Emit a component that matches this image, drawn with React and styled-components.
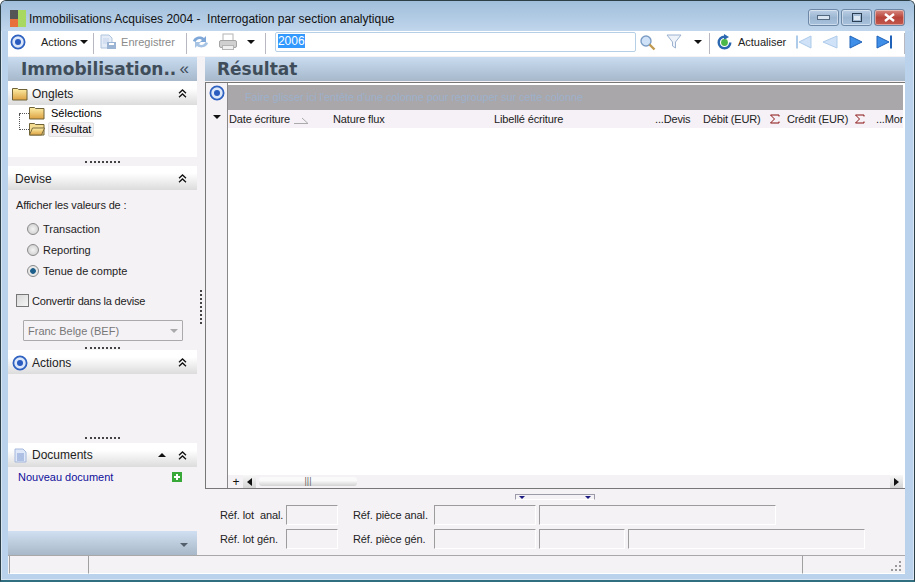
import React from "react";
import styled, { createGlobalStyle } from "styled-components";

const Global = createGlobalStyle`
  html, body { margin: 0; padding: 0; background: #fff; }
  body { font-family: "Liberation Sans", Arial, sans-serif; }
  * { box-sizing: border-box; }
`;

const Win = styled.div`
  width: 915px;
  height: 582px;
  display: flex;
  flex-direction: column;
  overflow: hidden;
  background: #bad2ec;
  border-radius: 6px 6px 0 0;
  border: 1px solid #2c3e46;
  border-bottom: 2px solid #2f6f80;
  box-shadow: inset 0 0 0 1px #d8e6f4;
`;
const TitleBar = styled.div`
  height: 30px;
  flex: none;
  display: flex;
  align-items: center;
  padding: 5px 9px 0 9px;
  background: linear-gradient(#a0bedb, #c0d6ec);
`;
const TitleText = styled.div`
  margin-left: 3px;
  font-size: 12px;
  color: #111;
  white-space: pre;
  flex: 1;
`;
const WinButtons = styled.div`
  display: flex;
  gap: 2px;
  margin-top: -2px;
`;
const WinButton = styled.div`
  width: 31px;
  height: 17px;
  border: 1px solid #6d88a6;
  border-radius: 3px;
  display: flex;
  align-items: center;
  justify-content: center;
  box-shadow: inset 0 0 0 1px #ffffff70;
  background: ${(p) => (p.$red ? "linear-gradient(#d88a80, #b8443a 50%, #c2584c)" : "linear-gradient(#bdd0e6, #9cb6d2 50%, #a8c2de)")};
`;
const Toolbar = styled.div`
  height: 25px;
  flex: none;
  margin: 0 9px 0 7px;
  background: #fff;
  display: flex;
  align-items: flex-start;
  padding-top: 1px;
  font-size: 11px;
  color: #222;
`;
const ToolSep = styled.div`
  width: 1px;
  height: 21px;
  flex: none;
  background: #b8b8c0;
  margin: 1px ${(p) => p.$r ?? 4}px 0 ${(p) => p.$l ?? 4}px;
`;
const ToolItem = styled.div`
  display: flex;
  align-items: center;
  flex: none;
  height: 20px;
  margin-left: ${(p) => p.$ml ?? 0}px;
  color: ${(p) => (p.$off ? "#8a8a8a" : "#222")};
  white-space: nowrap;
`;
const ToolLabel = styled.span`
  margin-left: 4px;
`;
const Caret = styled.span`
  display: inline-block;
  width: 0;
  height: 0;
  margin-left: ${(p) => p.$ml ?? 3}px;
  margin-right: ${(p) => p.$mr ?? 0}px;
  border-left: 4px solid transparent;
  border-right: 4px solid transparent;
  ${(p) => (p.$up ? "border-bottom: 4px solid #111;" : "border-top: 4px solid #111;")}
`;
const SearchBox = styled.div`
  width: 361px;
  height: 20px;
  flex: none;
  border: 1px solid #b5cfe6;
  border-radius: 2px;
  background: #fff;
  padding: 1px 2px;
  margin-left: 4px;
  font-size: 12px;
`;
const Selected = styled.span`
  background: #3399ff;
  color: #fff;
  display: inline-block;
  line-height: 14px;
`;
const Main = styled.div`
  flex: 1;
  margin: 0 9px 0 7px;
  padding-top: 1px;
  background: #f5f2f6;
  display: flex;
  min-height: 0;
`;
const Sidebar = styled.div`
  width: 189px;
  flex: none;
  display: flex;
  flex-direction: column;
`;
const PanelTitle = styled.div`
  height: 24px;
  flex: none;
  padding: ${(p) => p.$pad};
  display: flex;
  align-items: center;
  justify-content: space-between;
  background: linear-gradient(#c9dcf0, #a6b8ca);
  font-family: "DejaVu Sans", sans-serif;
  font-weight: bold;
  font-size: 17px;
  color: #3f4d5a;
  white-space: nowrap;
`;
const Collapse = styled.span`
  font-family: "Liberation Sans", sans-serif;
  font-weight: normal;
  font-size: 17px;
`;
const SectionHead = styled.div`
  height: 24px;
  flex: none;
  display: flex;
  align-items: center;
  gap: 4px;
  padding: ${(p) => p.$pt ?? 1}px 10px 0 ${(p) => p.$pl ?? 4}px;
  background: linear-gradient(#ffffff 30%, #dcdcdc);
  font-size: 12px;
  color: #222;
`;
const SectionLabel = styled.span`
  flex: 1;
`;
const Tree = styled.div`
  height: 52px;
  flex: none;
  background: #fff;
  padding: 0 0 0 11px;
  font-size: 11px;
`;
const TreeRow = styled.div`
  height: 16px;
  display: flex;
  align-items: center;
`;
const TreeLine = styled.span`
  width: 10px;
  flex: none;
  align-self: flex-start;
  height: ${(p) => (p.$tall ? 16 : 9)}px;
  margin-top: ${(p) => (p.$tall ? -7 : 0)}px;
  border-bottom: 1px dotted #555;
  border-left: ${(p) => (p.$tall ? "1px dotted #555" : "none")};
`;
const TreeLabel = styled.span`
  padding: 0 2px;
  margin-left: 3px;
  line-height: 13px;
  border-radius: 2px;
  background: ${(p) => (p.$active ? "#f2f0f2" : "transparent")};
  border: 1px solid ${(p) => (p.$active ? "#e2e2e2" : "transparent")};
`;
const Grip = styled.div`
  height: ${(p) => p.$h}px;
  flex: none;
  display: flex;
  align-items: center;
  justify-content: center;
  &::after {
    content: "";
    width: 35px;
    border-top: 2px dotted #444;
  }
`;
const DeviseBody = styled.div`
  height: 155px;
  flex: none;
  padding: 9px 0 0 8px;
  font-size: 11px;
  color: #222;
`;
const DeviseCaption = styled.div`
  letter-spacing: -0.15px;
`;
const Radios = styled.div`
  display: flex;
  flex-direction: column;
  margin: 7px 0 0 11px;
`;
const RadioRow = styled.div`
  display: flex;
  align-items: center;
  gap: 4px;
  height: 21px;
`;
const RadioDot = styled.span`
  width: 12px;
  height: 12px;
  border-radius: 50%;
  border: 1px solid #8a8a8a;
  background: ${(p) => (p.$on ? "radial-gradient(#1d5f8a 35%, #e8e8e8 45%)" : "radial-gradient(#f4f4f4, #c8c8c8)")};
`;
const CheckRow = styled.div`
  display: flex;
  align-items: center;
  gap: 3px;
  margin-top: 13px;
  letter-spacing: -0.2px;
`;
const CheckBox = styled.span`
  width: 13px;
  height: 13px;
  border: 1px solid #777;
  background: linear-gradient(135deg, #d8d8d8, #f6f6f6);
`;
const Combo = styled.div`
  width: 160px;
  height: 21px;
  margin: 13px 0 0 7px;
  border: 1px solid #aaa;
  border-radius: 1px;
  display: flex;
  align-items: center;
  justify-content: space-between;
  padding: 0 4px;
  color: #777;
`;
const ComboCaret = styled.span`
  width: 0;
  height: 0;
  border-left: 4px solid transparent;
  border-right: 4px solid transparent;
  border-top: 4px solid #aaa;
`;
const ActionsBody = styled.div`
  height: 58px;
  flex: none;
`;
const DocRow = styled.div`
  display: flex;
  align-items: center;
  justify-content: space-between;
  padding: 4px 15px 0 10px;
  color: #10109a;
  font-size: 11px;
`;
const Spacer = styled.div`
  flex: 1;
`;
const SideFoot = styled.div`
  height: 24px;
  flex: none;
  display: flex;
  align-items: center;
  justify-content: flex-end;
  padding: 3px 9px 0 0;
  background: linear-gradient(#d0e0f2, #a8b8c8);
`;
const FootCaret = styled.span`
  border-left: 4px solid transparent;
  border-right: 4px solid transparent;
  border-top: 4px solid #54606c;
`;
const RightCol = styled.div`
  flex: 1;
  min-width: 0;
  margin-left: 8px;
  display: flex;
  flex-direction: column;
  position: relative;
`;
const VGrip = styled.div`
  position: absolute;
  left: -5px;
  top: 233px;
  height: 34px;
  border-left: 2px dotted #444;
`;
const Grid = styled.div`
  height: 407px;
  flex: none;
  display: flex;
  border: 1px solid #777;
  border-width: 1px 0 1px 1px;
  margin-top: 1px;
`;
const GridGutter = styled.div`
  width: 22px;
  flex: none;
  border-right: 1px solid #888;
  display: flex;
  flex-direction: column;
  align-items: center;
  padding-top: 2px;
`;
const GutterCaret = styled.span`
  margin-top: 14px;
  border-left: 4px solid transparent;
  border-right: 4px solid transparent;
  border-top: 4px solid #111;
`;
const GridMain = styled.div`
  flex: 1;
  min-width: 0;
  display: flex;
  flex-direction: column;
  padding-top: 2px;
  background: #fff;
`;
const GroupBar = styled.div`
  height: 25px;
  flex: none;
  margin-right: 2px;
  background: #a9a7a9;
  color: #9db0cb;
  font-size: 11px;
  letter-spacing: -0.1px;
  padding: 5px 0 0 17px;
  line-height: 14px;
  white-space: nowrap;
`;
const ColHeads = styled.div`
  height: 18px;
  flex: none;
  margin-right: 2px;
  display: flex;
  align-items: center;
  padding-left: 1px;
  background: #f5f1f6;
  font-size: 11px;
  letter-spacing: -0.15px;
  color: #222;
  white-space: nowrap;
  overflow: hidden;
`;
const Col = styled.div`
  width: ${(p) => p.$w}px;
  flex: none;
  display: flex;
  align-items: center;
`;
const Rows = styled.div`
  flex: 1;
`;
const ScrollRow = styled.div`
  height: 13px;
  flex: none;
  margin-right: 2px;
  display: flex;
  align-items: center;
  padding-left: 1px;
  background: #f5f2f6;
  color: #111;
  font-size: 12px;
`;
const Plus = styled.span`
  width: 14px;
  text-align: center;
  line-height: 12px;
`;
const ScrollBtn = styled.span`
  width: 13px;
  height: 13px;
  flex: none;
  display: flex;
  align-items: center;
  justify-content: center;
  background: linear-gradient(#f8f8f8, #d4d4d4);
  &::after {
    content: "";
    border-top: 4px solid transparent;
    border-bottom: 4px solid transparent;
    border-${(p) => (p.$left ? "right" : "left")}: 5px solid #111;
  }
`;
const ScrollThumb = styled.div`
  width: 98px;
  height: 9px;
  margin-left: 3px;
  border-radius: 3px;
  background: linear-gradient(#fafafa 40%, #d2d2d2);
  color: #666;
  font-size: 9px;
  line-height: 9px;
  text-align: center;
`;
const SplitRow = styled.div`
  height: 16px;
  flex: none;
  position: relative;
`;
const SplitHandle = styled.div`
  position: absolute;
  left: 310px;
  top: 5px;
  width: 80px;
  height: 6px;
  border: 1px solid #9a9aa8;
  border-bottom-color: #fff;
  display: flex;
  justify-content: space-between;
  padding: 1px 3px 0;
`;
const SplitCaret = styled.span`
  border-left: 3px solid transparent;
  border-right: 3px solid transparent;
  border-top: 3px solid #1a1a80;
`;
const FormArea = styled.div`
  display: flex;
  flex-direction: column;
  gap: 4px;
  padding: 0 0 0 15px;
  font-size: 11px;
  color: #222;
`;
const FormRow = styled.div`
  display: flex;
  align-items: center;
  height: 20px;
`;
const FormLabel = styled.div`
  width: ${(p) => p.$w}px;
  flex: none;
  padding-left: ${(p) => p.$pl ?? 0}px;
  letter-spacing: -0.1px;
  white-space: pre;
`;
const Field = styled.div`
  width: ${(p) => p.$w}px;
  height: 20px;
  flex: none;
  margin-left: ${(p) => p.$ml ?? 0}px;
  border: 1px solid #fff;
  border-top-color: #9c9c9c;
  border-left-color: #9c9c9c;
`;
const Status = styled.div`
  height: 19px;
  flex: none;
  margin: 0 9px 0 7px;
  background: #f5f2f6;
  border-top: 1px solid #a8a8a8;
  display: flex;
  padding-left: 1px;
  position: relative;
`;
const StatusCell = styled.div`
  width: ${(p) => p.$w}px;
  flex: ${(p) => (p.$w ? "none" : "1")};
  border-left: 1px solid #a0a0a0;
  border-bottom: 1px solid #fff;
`;
const ResizeGrip = styled.svg`
  position: absolute;
  right: 3px;
  bottom: 2px;
`;
const FrameBottom = styled.div`
  height: 6px;
  flex: none;
`;

const Target = ({ size = 16 }) => (
  <svg width={size} height={size} viewBox="0 0 16 16" style={{ flex: "none" }}>
    <circle cx="8" cy="8" r="6.6" fill="#dce8fa" stroke="#2f62c0" strokeWidth="1.8" />
    <circle cx="8" cy="8" r="3" fill="#2a5cc0" />
  </svg>
);
const Folder = ({ open }) => (
  <svg width="16" height="14" viewBox="0 0 16 14" style={{ flex: "none" }}>
    <defs>
      <linearGradient id="fold" x1="0" y1="0" x2="0" y2="1">
        <stop offset="0" stopColor="#fdf0a8" />
        <stop offset="1" stopColor="#dca040" />
      </linearGradient>
    </defs>
    <path d="M.5 1.500h5l1 1h8.500v10.500H.5z" fill={open ? "#f4dc90" : "url(#fold)"} stroke="#6f6238" />
    {open && <path d="M.5 13l3-7h12l-3 7z" fill="url(#fold)" stroke="#7a6a3a" />}
  </svg>
);
const DoubleUp = () => (
  <svg width="9" height="9" viewBox="0 0 9 9" style={{ flex: "none" }}>
    <path d="M1 4.200L4.500 1 8 4.200M1 8.200L4.500 5 8 8.200" fill="none" stroke="#111" strokeWidth="1.3" />
  </svg>
);
const Sigma = () => (
  <svg width="11" height="10" viewBox="0 0 11 10">
    <path d="M10 2.500V1H1.500L5.500 5 1.500 9H10V7.500" fill="none" stroke="#8a1010" strokeWidth="1" />
  </svg>
);
const Nav = ({ dir, bar, off }) => {
  const fill = off ? "#cfe2f8" : "#3f8fe8";
  const edge = off ? "#aecbea" : "#1f62b8";
  const tri = {
    l: bar ? "M16 2v12L4 8z" : "M15 2v12L1 8z",
    r: bar ? "M1 2v12l12-6z" : "M2 2v12l12-6z",
  }[dir];
  return (
    <svg width="17" height="16" viewBox="0 0 17 16" style={{ flex: "none" }}>
      <path d={tri} fill={fill} stroke={edge} />
      {bar && <rect x={dir === "l" ? 1 : 14} y="1.500" width="2" height="13" fill={edge} />}
    </svg>
  );
};

export default function App() {
  return (
    <Win>
      <Global />
      <TitleBar>
        <svg width="16" height="17" viewBox="0 0 16 17" style={{ flex: "none" }}>
          <rect x="0" y="0" width="8" height="9" fill="#555" />
          <rect x="0" y="9" width="8" height="8" fill="#e8703a" />
          <rect x="8" y="0" width="8" height="17" fill="#a8d860" />
        </svg>
        <TitleText>Immobilisations Acquises 2004 -  Interrogation par section analytique</TitleText>
        <WinButtons>
          <WinButton><svg width="13" height="5"><rect x="0.5" y="0.5" width="12" height="4" fill="#d8e4f0" stroke="#55697e" /></svg></WinButton>
          <WinButton><svg width="10" height="9"><rect x="0.5" y="0.5" width="9" height="8" fill="none" stroke="#2c3e52" /><rect x="2" y="3" width="6" height="4" fill="#dfe9f4" /></svg></WinButton>
          <WinButton $red><svg width="11" height="9"><path d="M1 1l9 7M10 1L1 8" stroke="#fff" strokeWidth="2.4" /></svg></WinButton>
        </WinButtons>
      </TitleBar>
      <Toolbar>
        <ToolItem $ml={2}><Target /></ToolItem>
        <ToolItem $ml={15}>Actions<Caret /></ToolItem>
        <ToolSep $l={5} $r={5} />
        <ToolItem $off>
          <svg width="18" height="16" viewBox="0 0 18 16" style={{ flex: "none" }}>
            <path d="M2 1h8l3 3v10H2z" fill="#e4ecf8" stroke="#b0c4de" />
            <path d="M4 5h6M4 7h6M4 9h4" stroke="#c4d4ea" />
            <rect x="8" y="8" width="9" height="7" fill="#9cb4d4" />
            <rect x="10" y="9" width="5" height="2" fill="#fff" />
          </svg>
          <ToolLabel>Enregistrer</ToolLabel>
        </ToolItem>
        <ToolSep $l={11} $r={5} />
        <ToolItem>
          <svg width="17" height="16" viewBox="0 0 17 16">
            <path d="M1 7c1-4 7-6 11-3l2-2v6H8l2-2C8 4 5 5 3.500 8z" fill="#7fa8d8" />
            <path d="M16 9c-1 4-7 6-11 3l-2 2V8h6l-2 2c2 2 5 1 6.500-2z" fill="#a8c4e4" />
          </svg>
        </ToolItem>
        <ToolItem $ml={9}>
          <svg width="20" height="18" viewBox="0 0 20 18">
            <rect x="5" y="1" width="10" height="7" fill="#fff" stroke="#b4b4b4" />
            <rect x="1.500" y="7.500" width="17" height="7" rx="1.500" fill="#d0d0d0" stroke="#a4a4a4" />
            <rect x="4.500" y="12.500" width="11" height="4" fill="#f0f0f0" stroke="#b4b4b4" />
          </svg>
        </ToolItem>
        <ToolItem $ml={6}><Caret $ml={3} /></ToolItem>
        <ToolSep $l={10} $r={5} />
        <SearchBox><Selected>2006</Selected></SearchBox>
        <ToolItem $ml={3}>
          <svg width="17" height="17" viewBox="0 0 17 17">
            <circle cx="7" cy="7" r="5" fill="#cfe2f8" stroke="#7c9cc4" strokeWidth="1.4" />
            <path d="M10.500 10.500l5 5" stroke="#c09a50" strokeWidth="2.4" />
          </svg>
        </ToolItem>
        <ToolItem $ml={10}>
          <svg width="16" height="16" viewBox="0 0 16 16">
            <path d="M1 1h14L9.500 8v6l-3-2V8z" fill="#eef3fa" stroke="#9cb2d0" />
          </svg>
        </ToolItem>
        <ToolItem $ml={9}><Caret $ml={3} /></ToolItem>
        <ToolSep $l={7} $r={6} />
        <ToolItem>
          <svg width="17" height="17" viewBox="0 0 17 17">
            <path d="M8.500 1.500a7 7 0 1 0 7 7h-2.400a4.600 4.600 0 1 1-4.600-4.600z" fill="#2c68b0" />
            <path d="M8 0l5 3-5 3z" fill="#2c68b0" />
            <circle cx="8.500" cy="8.500" r="3.400" fill="#4cb848" />
          </svg>
        </ToolItem>
        <ToolItem $ml={5}>Actualiser</ToolItem>
        <ToolItem $ml={9}><Nav dir="l" bar off /></ToolItem>
        <ToolItem $ml={10}><Nav dir="l" off /></ToolItem>
        <ToolItem $ml={9}><Nav dir="r" /></ToolItem>
        <ToolItem $ml={11}><Nav dir="r" bar /></ToolItem>
        <ToolSep $l={11} $r={0} />
      </Toolbar>
      <Main>
        <Sidebar>
          <PanelTitle $pad="0 8px 0 13px">
            <span>Immobilisation..</span>
            <Collapse>«</Collapse>
          </PanelTitle>
          <SectionHead>
            <Folder />
            <SectionLabel>Onglets</SectionLabel>
            <DoubleUp />
          </SectionHead>
          <Tree>
            <TreeRow>
              <TreeLine />
              <Folder />
              <TreeLabel>Sélections</TreeLabel>
            </TreeRow>
            <TreeRow>
              <TreeLine $tall />
              <Folder open />
              <TreeLabel $active>Résultat</TreeLabel>
            </TreeRow>
          </Tree>
          <Grip $h={9} />
          <SectionHead $pl={7}>
            <SectionLabel>Devise</SectionLabel>
            <DoubleUp />
          </SectionHead>
          <DeviseBody>
            <DeviseCaption>Afficher les valeurs de :</DeviseCaption>
            <Radios>
              <RadioRow><RadioDot />Transaction</RadioRow>
              <RadioRow><RadioDot />Reporting</RadioRow>
              <RadioRow><RadioDot $on />Tenue de compte</RadioRow>
            </Radios>
            <CheckRow><CheckBox />Convertir dans la devise</CheckRow>
            <Combo>Franc Belge (BEF)<ComboCaret /></Combo>
          </DeviseBody>
          <Grip $h={5} />
          <SectionHead $pl={4}>
            <Target />
            <SectionLabel>Actions</SectionLabel>
            <DoubleUp />
          </SectionHead>
          <ActionsBody />
          <Grip $h={11} />
          <SectionHead $pl={5} $pt={0}>
            <svg width="15" height="15" viewBox="0 0 15 15" style={{ flex: "none" }}>
              <path d="M2 1h8l3 3v10H2z" fill="#dfe8f8" stroke="#a4b8dc" />
              <path d="M4 6h7M4 8h7M4 10h7M4 12h7" stroke="#7c98d0" />
            </svg>
            <SectionLabel>Documents</SectionLabel>
            <Caret $up $ml={0} $mr={8} />
            <DoubleUp />
          </SectionHead>
          <DocRow>
            Nouveau document
            <svg width="10" height="10" viewBox="0 0 10 10">
              <rect width="10" height="10" fill="#38a838" />
              <path d="M5 2v6M2 5h6" stroke="#fff" strokeWidth="2" />
            </svg>
          </DocRow>
          <Spacer />
          <SideFoot><FootCaret /></SideFoot>
        </Sidebar>
        <RightCol>
          <VGrip />
          <PanelTitle $pad="0 0 0 12px">Résultat</PanelTitle>
          <Grid>
            <GridGutter>
              <Target />
              <GutterCaret />
            </GridGutter>
            <GridMain>
              <GroupBar>Faire glisser ici l'entête d'une colonne pour regrouper sur cette colonne</GroupBar>
              <ColHeads>
                <Col $w={104}>
                  Date écriture
                  <svg width="15" height="7" viewBox="0 0 15 7" style={{ marginLeft: 4, marginTop: 3 }}>
                    <path d="M0 6.500h14L8 1" fill="none" stroke="#aaa" />
                  </svg>
                </Col>
                <Col $w={161}>Nature flux</Col>
                <Col $w={161}>Libellé écriture</Col>
                <Col $w={48}>...Devis</Col>
                <Col $w={66}>Débit (EUR)</Col>
                <Col $w={18}><Sigma /></Col>
                <Col $w={67}>Crédit (EUR)</Col>
                <Col $w={22}><Sigma /></Col>
                <Col $w={28}>...Mon</Col>
              </ColHeads>
              <Rows />
              <ScrollRow>
                <Plus>+</Plus>
                <ScrollBtn $left />
                <ScrollThumb>|||</ScrollThumb>
                <Spacer />
                <ScrollBtn />
              </ScrollRow>
            </GridMain>
          </Grid>
          <SplitRow>
            <SplitHandle><SplitCaret /><SplitCaret /></SplitHandle>
          </SplitRow>
          <FormArea>
            <FormRow>
              <FormLabel $w={66}>Réf. lot  anal.</FormLabel>
              <Field $w={52} />
              <FormLabel $w={96} $pl={15}>Réf. pièce anal.</FormLabel>
              <Field $w={102} />
              <Field $w={237} $ml={3} />
            </FormRow>
            <FormRow>
              <FormLabel $w={66}>Réf. lot gén.</FormLabel>
              <Field $w={52} />
              <FormLabel $w={96} $pl={15}>Réf. pièce gén.</FormLabel>
              <Field $w={102} />
              <Field $w={86} $ml={3} />
              <Field $w={237} $ml={3} />
            </FormRow>
          </FormArea>
        </RightCol>
      </Main>
      <Status>
        <StatusCell $w={79} />
        <StatusCell />
        <StatusCell $w={103} />
        <ResizeGrip width="11" height="11" viewBox="0 0 11 11">
          <path d="M8 0h2v2H8zM8 4h2v2H8zM4 4h2v2H4zM8 8h2v2H8zM4 8h2v2H4zM0 8h2v2H0z" fill="#9a9a9a" />
        </ResizeGrip>
      </Status>
      <FrameBottom />
    </Win>
  );
}
